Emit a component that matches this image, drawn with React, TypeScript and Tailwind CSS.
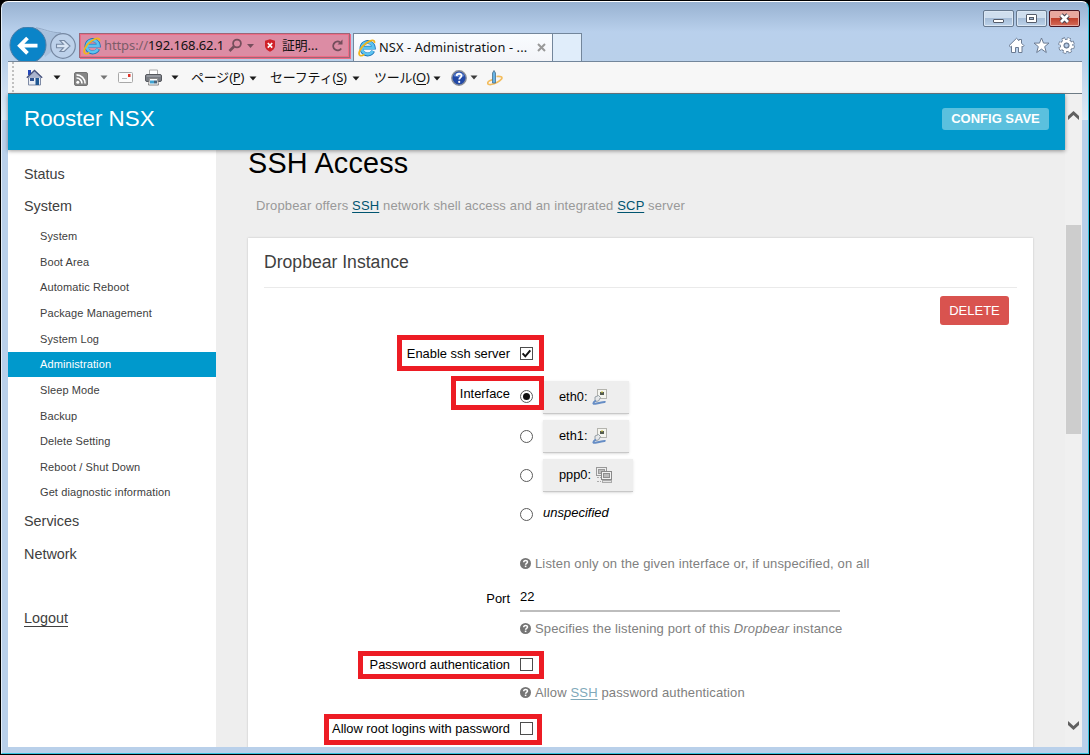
import React from "react";

const UI = "font-['Noto_Sans','Noto_Sans_CJK_JP',sans-serif]";

function IELogo() {
  return (
    <svg width="18" height="18" viewBox="0 0 18 18" className="shrink-0">
      <path d="M15.2 12a6.2 6.2 0 1 1 .6-3.4H5.5" fill="none" stroke="#1c74b8" strokeWidth="3.8" />
      <path d="M14.8 12a5.900 5.900 0 1 1 .7-3.100H5.200" fill="none" stroke="#5cc3f0" strokeWidth="2.700" />
      <path d="M2 16.600C-.6 14.600 3 7.600 8.400 3.900 12.500 1.100 17 .2 16.400 4" fill="none" stroke="#f0b51c" strokeWidth="1.800" />
      <path d="M2 16.600c1.500.6 3.600-.6 4.400-1.200" fill="none" stroke="#f0b51c" strokeWidth="1.600" />
    </svg>
  );
}

function Caret({ color = "#1a1a1a" }: { color?: string }) {
  return (
    <svg width="8" height="5" viewBox="0 0 8 5" className="shrink-0">
      <path d="M.5.5h7L4 4.500z" fill={color} />
    </svg>
  );
}

function WindowButton({ kind }: { kind: "min" | "max" | "close" }) {
  const close = kind === "close";
  return (
    <div
      className={
        close
          ? "flex h-[17px] w-[31px] items-center justify-center rounded-[2px] border border-[#4a1420] bg-linear-to-b from-[#e9a79e] from-45% via-[#c0402c] via-50% to-[#d46a58] shadow-[inset_0_0_0_1px_#e6aaa2]"
          : "flex h-[17px] w-[31px] items-center justify-center rounded-[2px] border border-[#66788e] bg-linear-to-b from-[#cfdeee] from-45% via-[#a6bdd8] via-50% to-[#bdd3ea] shadow-[inset_0_0_0_1px_#dbe7f4]"
      }
    >
      <svg width="13" height="11" viewBox="0 0 13 11">
        {kind === "min" && <rect x="1.500" y="6.500" width="10" height="3" rx=".5" fill="#fff" stroke="#555c6a" />}
        {kind === "max" && (
          <>
            <rect x="1.500" y="1.500" width="10" height="8" rx=".5" fill="#fff" stroke="#555c6a" />
            <rect x="4.500" y="4.500" width="4" height="2" fill="#9fb6d0" stroke="#555c6a" />
          </>
        )}
        {close && (
          <>
            <path d="M3 2l7 7M10 2L3 9" stroke="#4b4450" strokeWidth="4.800" />
            <path d="M3 2l7 7M10 2L3 9" stroke="#fff" strokeWidth="2.700" />
          </>
        )}
      </svg>
    </div>
  );
}

function BackForward() {
  return (
    <svg width="71" height="36" viewBox="0 0 71 36" className="ml-[1px] shrink-0 self-end">
      <path d="M26 1c8 1 14 6 26 5l4 8-20 16z" fill="#a9c0dc" />
      <path d="M27 .8c8 1 14 5 25 5" fill="none" stroke="#93a9c5" />
      <circle cx="54" cy="19" r="12.300" fill="#bdd1ea" stroke="#7688a2" strokeWidth="1.200" />
      <path d="M47.500 17.300h7L51 13.500h4.300l5.700 5.500-5.700 5.500H51l3.500-3.800h-7z" fill="#d9e5f4" stroke="#7688a2" strokeWidth="1.100" />
      <circle cx="19" cy="18" r="18" fill="#0b84c8" stroke="#4d7ca5" />
      <path d="M28.500 18.700H10M18.500 11l-7.700 7.700 7.700 7.700" fill="none" stroke="#fff" strokeWidth="3.800" />
    </svg>
  );
}

function AddressBar() {
  return (
    <div className={`ml-[-1px] flex h-[25px] w-[271px] items-center border border-[#9c6678] bg-[#dc8ca4] pl-[3px] shadow-[1px_1px_0_#ed6c86,inset_0_0_0_1px_#ed6c86] ${UI}`}>
      <IELogo />
      <span className="ml-[3px] w-[121px] whitespace-nowrap text-[13px] tracking-[-0.1px] text-[#7d5c69]">
        https://<span className="text-[#111]">192.168.62.1</span>
      </span>
      <svg width="16" height="15" viewBox="0 0 16 15" className="ml-[3px]">
        <circle cx="9" cy="5.500" r="3.900" fill="none" stroke="#754e5c" strokeWidth="1.800" />
        <path d="M6 8.500L1.500 13" stroke="#754e5c" strokeWidth="2.600" />
      </svg>
      <svg width="7" height="4" className="ml-[3px]"><path d="M0 0h7L3.500 4z" fill="#754e5c" /></svg>
      <svg width="12" height="13" viewBox="0 0 12 13" className="ml-[10px]">
        <path d="M6 .3l5 1.500v5C11 9.800 8.500 11.500 6 12.700 3.500 11.500 1 9.800 1 6.800v-5z" fill="#cf2029" />
        <path d="M3.800 4l4.400 4.600M8.200 4L3.800 8.600" stroke="#fff" strokeWidth="1.700" />
      </svg>
      <span className="ml-[6px] w-[37px] whitespace-nowrap pt-[1px] text-[12.800px] text-[#111]">証明...</span>
      <svg width="13" height="13" viewBox="0 0 13 13" className="ml-[12px]">
        <path d="M10.200 9.500A4.400 4.400 0 1 1 9 3.200" fill="none" stroke="#754e5c" strokeWidth="1.900" />
        <path d="M6.500 5.600h5V.6z" fill="#754e5c" />
      </svg>
    </div>
  );
}

function ChromeIcons() {
  return (
    <div className="mr-[7px] flex items-center gap-[8px] pt-[9px]">
      <svg width="17" height="17" viewBox="0 0 17 17">
        <path d="M1 8.700L8.500 1.300l2.500 2.400V2.500h2.500v3.700L16 8.700l-1.200 1.200-.8-.7v6.300h-3.500v-5h-3v5H3.500V9.200l-1 .7z" fill="#fff" stroke="#6b7b92" strokeWidth="1" />
      </svg>
      <svg width="17" height="17" viewBox="0 0 17 17">
        <path d="M8.500 1l2 5.100H16l-4.300 3.500 1.600 5.900-4.800-3.400-4.800 3.400 1.600-5.900L1 6.100h5.500z" fill="#fff" stroke="#6b7b92" />
      </svg>
      <svg width="17" height="17" viewBox="0 0 17 17">
        <circle cx="8.500" cy="8.500" r="6.200" fill="none" stroke="#6b7b92" strokeWidth="4.200" strokeDasharray="2.900 1.970" />
        <circle cx="8.500" cy="8.500" r="4.400" fill="none" stroke="#6b7b92" strokeWidth="4.600" />
        <circle cx="8.500" cy="8.500" r="6.100" fill="none" stroke="#fff" strokeWidth="2.800" strokeDasharray="2.200 2.590" strokeDashoffset="-.3" />
        <circle cx="8.500" cy="8.500" r="4.400" fill="none" stroke="#fff" strokeWidth="2.800" />
        <circle cx="8.500" cy="8.500" r="2.200" fill="#b9cfea" stroke="#6b7b92" />
      </svg>
    </div>
  );
}

function MenuText({ text, hot, cls }: { text: string; hot: string; cls: string }) {
  return (
    <span className={`whitespace-nowrap text-[13px] text-[#111] ${cls}`}>
      {text}(<span className="underline underline-offset-2">{hot}</span>)
    </span>
  );
}

function CommandBar() {
  return (
    <div className={`flex h-[33px] shrink-0 items-center border-y border-t-[#73869b] border-b-[#6d7b85] bg-[#f7f7f7] ${UI}`}>
      <div className="ml-[4px] h-[31px] w-[2px] bg-[repeating-linear-gradient(to_bottom,#c0c0c0_0_2px,transparent_2px_4px)]" />
      <svg width="17" height="17" viewBox="0 0 17 17" className="ml-[12px]">
        <path d="M2.500 8h12v8h-12z" fill="#e9edf5" stroke="#7f8ba5" />
        <path d="M2 1h3v5H2z" fill="#2447b8" />
        <path d="M.8 8.800L8.500 1.500l7.700 7.300" fill="#aab4ce" stroke="#46527c" strokeWidth="1.300" />
        <path d="M4 9h4v3H4z" fill="#31528f" /><path d="M9.500 9h3.500v7H9.500z" fill="#205893" />
      </svg>
      <span className="ml-[10px] flex"><Caret /></span>
      <svg width="14" height="14" viewBox="0 0 14 14" className="mt-[2px] ml-[13px]">
        <rect x=".5" y=".5" width="13" height="13" rx="1.500" fill="#858585" stroke="#737373" />
        <circle cx="3.800" cy="10.300" r="1.500" fill="#fff" />
        <path d="M2.500 6a5.500 5.500 0 0 1 5.500 5.500M2.500 2.900a8.600 8.600 0 0 1 8.600 8.600" fill="none" stroke="#fff" strokeWidth="1.600" />
      </svg>
      <span className="ml-[12px] flex"><Caret color="#747474" /></span>
      <svg width="15" height="11" viewBox="0 0 15 11" className="ml-[10px]">
        <rect x=".5" y=".5" width="14" height="10" rx="1" fill="#fbfbfb" stroke="#a8a8a8" />
        <path d="M4 6.500h5" stroke="#b7b7b7" /><path d="M10 2h2.500v3H10z" fill="#e0352b" />
      </svg>
      <svg width="17" height="17" viewBox="0 0 17 17" className="ml-[12px]">
        <path d="M4.500 1h8v5h-8z" fill="#fff" stroke="#aaa" />
        <rect x=".5" y="5.500" width="16" height="7" rx="1.500" fill="#777b82" stroke="#55585e" />
        <path d="M1.500 7h14" stroke="#b3b6bb" />
        <path d="M4.500 9.500h8l1 6.500h-10z" fill="#fff" stroke="#888" />
        <path d="M5 11.500h4v3H5z" fill="#41a3d1" /><path d="M9 11.500h3v3H9z" fill="#46657e" />
      </svg>
      <span className="ml-[9px] flex"><Caret /></span>
      <MenuText text="ページ" hot="P" cls="ml-[12px] w-[54px] tracking-[-0.200px]" />
      <span className="ml-[4px] flex pt-px"><Caret /></span>
      <MenuText text="セーフティ" hot="S" cls="ml-[13px] w-[78px] tracking-[-0.200px]" />
      <span className="ml-[4px] flex pt-px"><Caret /></span>
      <MenuText text="ツール" hot="O" cls="ml-[14px] w-[55px] tracking-[-0.200px]" />
      <span className="ml-[4px] flex pt-px"><Caret /></span>
      <svg width="16" height="16" viewBox="0 0 16 16" className="ml-[10px]">
        <circle cx="8" cy="8" r="7.200" fill="#2148a6" stroke="#8a8f99" strokeWidth="1.400" />
        <path d="M2.500 6a6 6 0 0 1 11 0c-3 1.500-8 1.500-11 0z" fill="#5f83cf" />
        <path d="M5.700 6c0-3 4.800-2.900 4.800-.2 0 1.800-2.300 1.800-2.300 3.700" fill="none" stroke="#fff" strokeWidth="1.800" />
        <circle cx="8.200" cy="11.900" r="1.100" fill="#fff" />
      </svg>
      <span className="ml-[3px] flex"><Caret color="#3c3c3c" /></span>
      <svg width="16" height="16" viewBox="0 0 16 16" className="ml-[9px]">
        <path d="M6 9.500c-7 2-6.500 5.500-2 5s9-3.500 10.500-5.500-1-3-5-2.500" fill="none" stroke="#f3bd5e" strokeWidth="1.700" />
        <path d="M5.500 3L7 .5 8.500 3v10h-3z" fill="#69b4e4" stroke="#48708e" strokeWidth=".8" />
      </svg>
    </div>
  );
}

function WindowChrome() {
  return (
    <>
      <div className="flex h-[26px] shrink-0 items-start justify-end gap-[2px] pt-[8px] pr-[2px]">
        <WindowButton kind="min" />
        <WindowButton kind="max" />
        <WindowButton kind="close" />
      </div>
      <div className="flex h-[33px] shrink-0 items-start">
        <div className="mt-[-1px] flex"><BackForward /></div>
        <div className="pt-[5px]"><AddressBar /></div>
        <div className={`mt-[5px] ml-[3px] flex h-[28px] w-[200px] items-center border border-b-0 border-[#73869b] bg-linear-to-b from-[#f9fcff] to-[#f3f4f8] pl-[4px] ${UI}`}>
          <IELogo />
          <span className="ml-[3px] w-[152px] text-[12.800px] tracking-[0.120px] whitespace-nowrap text-[#111]">NSX - Administration - ...</span>
          <svg width="9" height="9" viewBox="0 0 9 9" className="ml-[6px]">
            <path d="M1 1l7 7M8 1L1 8" stroke="#999" strokeWidth="2" />
          </svg>
        </div>
        <div className="mt-[5px] h-[28px] w-[29px] border-t border-r border-[#73869b] bg-[#e0edfa]" />
        <div className="flex-1" />
        <ChromeIcons />
      </div>
    </>
  );
}

const systemItems = [
  "System", "Boot Area", "Automatic Reboot", "Package Management", "System Log", "Administration",
  "Sleep Mode", "Backup", "Delete Setting", "Reboot / Shut Down", "Get diagnostic information",
];

function Sidebar() {
  return (
    <nav className="flex w-[208px] shrink-0 flex-col bg-white pt-[8px] text-[14.400px] text-[#404040]">
      <div className="flex h-[33px] items-center pl-4">Status</div>
      <div className="flex h-[32.600px] items-center pl-4">System</div>
      {systemItems.map((item) => (
        <div
          key={item}
          className={
            item === "Administration"
              ? "flex h-[25.640px] shrink-0 items-center bg-[#0099cc] pl-8 text-[11px] tracking-[0.100px] text-white"
              : "flex h-[25.640px] shrink-0 items-center pl-8 text-[11px] tracking-[0.100px]"
          }
        >
          {item}
        </div>
      ))}
      <div className="flex h-[33px] items-center pl-4">Services</div>
      <div className="flex h-[32px] items-center pl-4">Network</div>
      <div className="mt-[33px] flex h-[32px] items-center pl-4">
        <span className="border-b border-[#404040] leading-[15px]">Logout</span>
      </div>
    </nav>
  );
}

function HelpText({ children }: { children: React.ReactNode }) {
  return (
    <div className="flex items-center pl-[272px] leading-4 tracking-[0.140px] text-[#808080]">
      <svg width="11" height="11" viewBox="0 0 11 11" className="mr-[4px] mb-px shrink-0">
        <circle cx="5.500" cy="5.500" r="5.500" fill="#757575" />
        <path d="M3.700 4.200c0-2.400 3.800-2.300 3.800-.2 0 1.300-1.900 1.300-1.900 2.700" fill="none" stroke="#fff" strokeWidth="1.500" />
        <path d="M4.800 7.600h1.600v1.500H4.800z" fill="#fff" />
      </svg>
      <span className="whitespace-nowrap">{children}</span>
    </div>
  );
}

function Checkbox({ checked = false }: { checked?: boolean }) {
  return (
    <svg width="13" height="13" viewBox="0 0 13 13" className="mb-px shrink-0">
      <rect x=".5" y=".5" width="12" height="12" fill="#fff" stroke="#4d4d4d" />
      {checked && <path d="M2.600 6.300l2.700 3 5-6" fill="none" stroke="#111" strokeWidth="2" />}
    </svg>
  );
}

function Radio({ checked = false }: { checked?: boolean }) {
  return (
    <svg width="13" height="13" viewBox="0 0 13 13" className={checked ? "mb-[2px] shrink-0" : "shrink-0"}>
      <circle cx="6.500" cy="6.500" r="6" fill="#fff" stroke="#5a5a5a" />
      {checked && <circle cx="6.500" cy="6.500" r="3.500" fill="#111" />}
    </svg>
  );
}

function EthIcon() {
  return (
    <svg width="16" height="16" viewBox="0 0 16 16">
      <rect x="5.500" y=".5" width="9" height="9" fill="#f5f5ef" stroke="#b4b4ae" />
      <path d="M8 3h4v3H8z" fill="#555c50" /><path d="M9 2.500h2v1H9z" fill="#d0c83a" />
      <path d="M3 8l3.500-1.500 2 2L6.500 12l-3.500.5z" fill="#e6e8ea" stroke="#8d979e" strokeWidth=".9" />
      <path d="M4 11.500C0 14 1 15.500 4.500 14.500s7-2 9-1.500" fill="none" stroke="#668dc5" strokeWidth="2" />
    </svg>
  );
}

function PppIcon() {
  return (
    <svg width="17" height="17" viewBox="0 0 17 17">
      <rect x=".5" y=".5" width="10" height="8" fill="#eee" stroke="#999" />
      <rect x="2.500" y="2.500" width="6" height="4" fill="#bbb" stroke="#999" />
      <path d="M1 10.500h4M1 14.500h4" stroke="#aaa" strokeDasharray="2 1" />
      <rect x="5.500" y="4.500" width="10" height="8" fill="#f2f2f2" stroke="#898989" />
      <rect x="7.500" y="6.500" width="6" height="4" fill="#bbb" stroke="#909090" />
      <rect x="6.500" y="13.500" width="9" height="2" fill="#e4e4e4" stroke="#aaa" />
    </svg>
  );
}

function Mark({ cls }: { cls: string }) {
  return <div className={`pointer-events-none absolute border-[5px] border-[#ed1c24] ${cls}`} />;
}

function Label({ children }: { children: React.ReactNode }) {
  return <div className="w-[263px] shrink-0 pr-px text-right text-[12.900px] whitespace-nowrap">{children}</div>;
}

const interfaces = [
  { name: "eth0:", on: true, ppp: false },
  { name: "eth1:", on: false, ppp: false },
  { name: "ppp0:", on: false, ppp: true },
];

function Card() {
  return (
    <section className="flex h-[520px] w-[785px] shrink-0 flex-col bg-white text-[13px] text-black shadow-[0_0_2px_rgba(0,0,0,0.2)]">
      <h3 className="mx-4 flex h-[50px] shrink-0 items-center border-b border-[#eaeaea] text-[17.600px] text-[#404040]">Dropbear Instance</h3>
      <div className="flex h-[47px] shrink-0 items-start justify-end pt-2 pr-6">
        <button className="h-[29px] w-[69px] rounded-[3px] bg-[#d9534f] text-[13px] text-white">DELETE</button>
      </div>
      <div className="relative flex h-[38px] shrink-0 items-center gap-[9px]">
        <Mark cls="left-[149px] top-0 h-[36px] w-[147px]" />
        <Label>Enable ssh server</Label>
        <Checkbox checked />
      </div>
      <div className="relative flex h-[173px] shrink-0 gap-[9px] pt-[8px]">
        <Mark cls="left-[203px] top-[3px] h-[34px] w-[93px]" />
        <div className="pt-[3px]"><Label>Interface</Label></div>
        <div className="flex flex-col gap-[6px]">
          {interfaces.map((i) => (
            <div key={i.name} className="flex h-[33px] items-center">
              <Radio checked={i.on} />
              <div className={i.ppp ? "ml-[10px] flex h-[33px] w-[90px] items-center gap-[5px] border-b border-[#c8c8c8] bg-[#eee] pl-4 text-[12.800px] shadow-sm" : "ml-[10px] flex h-[33px] w-[86px] items-center gap-[5px] border-b border-[#c8c8c8] bg-[#eee] pl-4 text-[12.800px] shadow-sm"}>
                {i.name}
                {i.ppp ? <PppIcon /> : <EthIcon />}
              </div>
            </div>
          ))}
          <div className="flex h-[33px] items-center">
            <Radio />
            <em className="ml-[10px] pb-[3px]">unspecified</em>
          </div>
        </div>
      </div>
      <div className="flex h-[34px] shrink-0 flex-col pt-[10px]"><HelpText>Listen only on the given interface or, if unspecified, on all</HelpText></div>
      <div className="flex h-[32px] shrink-0 gap-[9px]">
        <div className="pt-[9px]"><Label>Port</Label></div>
        <div className="h-[32px] w-[320px] border-b-2 border-[#bdbdbd] pt-[7px]">22</div>
      </div>
      <div className="flex h-[39px] shrink-0 flex-col pt-[9px]"><HelpText>Specifies the listening port of this <i>Dropbear</i> instance</HelpText></div>
      <div className="relative flex h-[28px] shrink-0 items-center gap-[9px]">
        <Mark cls="left-[110px] top-0 h-[28px] w-[186px]" />
        <Label>Password authentication</Label>
        <Checkbox />
      </div>
      <div className="flex h-[35px] shrink-0 flex-col pt-[6px]">
        <HelpText>Allow <span className="text-[#80a9ba] underline underline-offset-2">SSH</span> password authentication</HelpText>
      </div>
      <div className="relative flex h-[30px] shrink-0 items-center gap-[9px]">
        <Mark cls="left-[76px] top-0 h-[31px] w-[218px]" />
        <Label><span className="tracking-[-0.040px]">Allow root logins with password</span></Label>
        <Checkbox />
      </div>
    </section>
  );
}

function Scrollbar() {
  return (
    <div className="flex w-[17px] shrink-0 flex-col items-center bg-[#f0f0f0]">
      <svg width="11" height="9" viewBox="0 0 11 9" className="mt-[17px]">
        <path d="M0 5L5.500 0 11 5v4L5.500 4 0 9z" fill="#606060" />
      </svg>
      <div className="mt-[105px] h-[209px] w-[15px] bg-[#cdcdcd]" />
      <div className="flex-1" />
      <svg width="11" height="9" viewBox="0 0 11 9" className="mb-[17px]">
        <path d="M0 4l5.500 5L11 4V0L5.500 5 0 0z" fill="#606060" />
      </svg>
    </div>
  );
}

export default function App() {
  return (
    <div className="h-[755px] w-[1090px] overflow-hidden bg-black pt-px pl-px">
      <div className="flex h-[753px] w-[1088px] flex-col overflow-hidden rounded-t-[7px] border border-[#35c3df] border-t-white border-l-[#e4eef8] bg-[linear-gradient(to_bottom,#98b2d1_0px,#b9d0ec_30px,#b9d0ea_58px,#dfeaf6_118px,#b9d0ea_118px)] px-[6px] pb-[6px] font-['Liberation_Sans',sans-serif]">
        <WindowChrome />
        <div className="flex min-h-0 w-[1074px] flex-1 flex-col">
          <CommandBar />
          <div className="flex min-h-0 flex-1">
            <div className="flex w-[1057px] shrink-0 flex-col bg-[#eee]">
              <header className="z-10 flex h-[56px] shrink-0 items-center justify-between bg-[#0099cc] pr-4 pl-4 shadow-[0_1px_4px_rgba(0,0,0,0.4)]">
                <span className="pb-[6px] text-[22.400px] text-white">Rooster NSX</span>
                <span className="mb-[6px] flex h-[22px] w-[107px] items-center justify-center rounded-[3px] bg-[#5bc0de] text-[13px] font-bold text-white">CONFIG SAVE</span>
              </header>
              <div className="flex min-h-0 flex-1 overflow-hidden">
                <Sidebar />
                <main className="flex min-w-0 flex-1 flex-col overflow-hidden pl-8">
                  <h2 className="h-[30px] shrink-0 text-[28.800px] leading-[26px] tracking-[0.200px] text-black">SSH Access</h2>
                  <p className="mt-[17px] mb-[23px] shrink-0 pl-2 text-[13px] leading-[18px] tracking-[0.150px] text-[#999]">
                    Dropbear offers <span className="text-[#005470] underline underline-offset-2">SSH</span> network shell access and an integrated{" "}
                    <span className="text-[#005470] underline underline-offset-2">SCP</span> server
                  </p>
                  <Card />
                </main>
              </div>
            </div>
            <Scrollbar />
          </div>
        </div>
      </div>
    </div>
  );
}
